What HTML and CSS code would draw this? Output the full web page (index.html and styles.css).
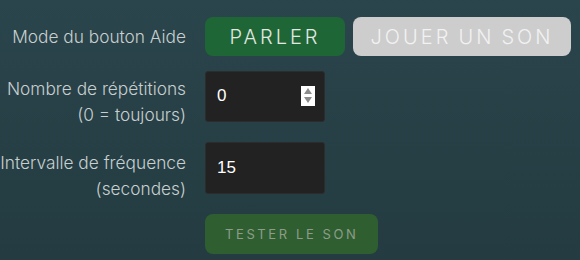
FILE: index.html
```html
<!DOCTYPE html>
<html>
<head>
  <meta charset="utf-8">
  <link rel="stylesheet" href="styles.css">
</head>
<body>
  <div class="settings">
    <div class="row row-mode">
      <div class="label">Mode du bouton Aide</div>
      <div class="choices">
        <button class="btn btn-active">PARLER</button>
        <button class="btn btn-off">JOUER UN SON</button>
      </div>
    </div>

    <div class="row">
      <div class="label label-multi">Nombre de répétitions<br>(0 = toujours)</div>
      <div class="field">
        <span class="field-value">0</span>
        <span class="spinner">
          <span class="arrow arrow-up"></span>
          <span class="arrow arrow-down"></span>
        </span>
      </div>
    </div>

    <div class="row">
      <div class="label label-multi label-low">Intervalle de fréquence<br>(secondes)</div>
      <div class="field field-tall">
        <span class="field-value">15</span>
      </div>
    </div>

    <div class="row">
      <div class="label"></div>
      <button class="btn-test">TESTER LE SON</button>
    </div>
  </div>
</body>
</html>
```

FILE: styles.css
```css
html, body {
  margin: 0;
  height: 100%;
}

body {
  width: 580px;
  height: 260px;
  overflow: hidden;
  background: linear-gradient(#2b454c, #233b41);
  font-family: Inter, 'Noto Sans', sans-serif;
}

.settings {
  margin-left: -34px;
  padding-top: 17px;
}

.row {
  display: flex;
  align-items: center;
  gap: 19px;
  margin-bottom: 20px;
}

.row:last-child {
  margin-bottom: 0;
}

.row-mode {
  margin-bottom: 14px;
}

.label {
  flex: 0 0 220px;
  text-align: right;
  white-space: nowrap;
  font-size: 17.3px;
  font-weight: 300;
  line-height: 26px;
  color: #c8cfcf;
}

/* two-line labels sit a little below the field's centre */
.label-multi {
  margin-top: 6px;
  margin-bottom: -6px;
}

.label-low {
  margin-top: 8px;
  margin-bottom: -8px;
}

.choices {
  display: flex;
  gap: 8px;
}

.btn {
  height: 39px;
  padding: 0;
  border: none;
  border-radius: 8px;
  text-align: center;
  font-family: Inter, sans-serif;
  font-size: 20px;
  font-weight: 300;
  letter-spacing: 3px;
}

.btn-active {
  width: 140px;
  background: #1f6636;
  color: #e2e8e2;
}

.btn-off {
  width: 218px;
  word-spacing: -1.5px;
  background: #cdcdcd;
  color: #f2f2f2;
}

.field {
  position: relative;
  box-sizing: border-box;
  width: 120px;
  height: 51px;
  padding-left: 11px;
  display: flex;
  align-items: center;
  background: #222222;
  border: 1px solid #2c2c2c;
  border-radius: 3px;
}

.field-tall {
  height: 52px;
}

.field-value {
  font-family: 'Liberation Sans', Arial, sans-serif;
  font-size: 17px;
  color: #ffffff;
}

.spinner {
  position: absolute;
  right: 9px;
  top: 14px;
  width: 14px;
  height: 20px;
  background: #ffffff;
  display: flex;
  flex-direction: column;
  align-items: center;
  justify-content: center;
  gap: 3px;
}

.arrow {
  width: 0;
  height: 0;
  border-left: 4px solid transparent;
  border-right: 4px solid transparent;
}

.arrow-up {
  border-bottom: 6px solid #8c8c8c;
}

.arrow-down {
  border-top: 6px solid #8c8c8c;
}

.btn-test {
  height: 40px;
  padding: 0 20px;
  border: none;
  border-radius: 8px;
  background: #2f5f30;
  color: #8d9c8a;
  font-family: Inter, sans-serif;
  font-size: 13px;
  letter-spacing: 2.6px;
}
```
